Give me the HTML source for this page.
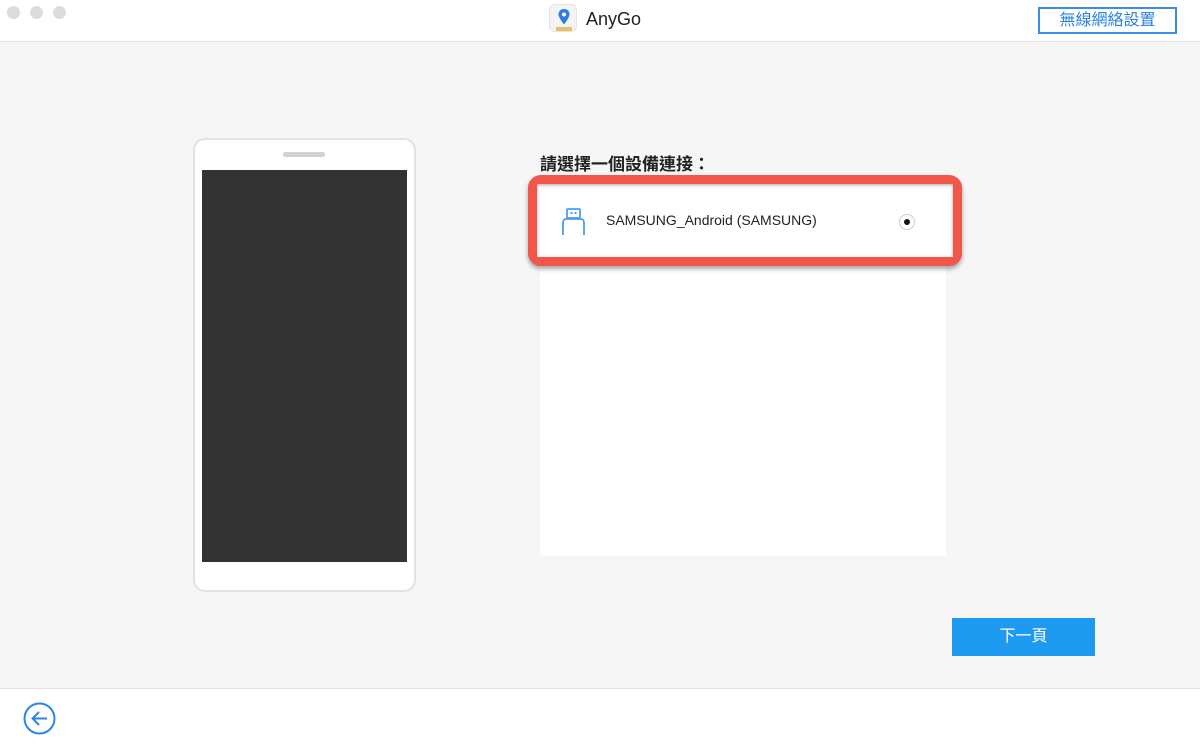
<!DOCTYPE html>
<html><head><meta charset="utf-8"><style>
*{margin:0;padding:0;box-sizing:border-box}
body{width:1200px;height:749px;overflow:hidden;background:#f6f6f6;font-family:"Liberation Sans","Noto Sans CJK TC",sans-serif;position:relative}
.abs{position:absolute}
</style></head><body>
<div class="abs" style="left:0;top:0;width:1200px;height:42px;background:#fff;border-bottom:1px solid #e6e6e6"></div>
<div class="abs" style="left:7px;top:6px;width:13px;height:13px;border-radius:50%;background:#dcdcdc"></div>
<div class="abs" style="left:30px;top:6px;width:13px;height:13px;border-radius:50%;background:#dcdcdc"></div>
<div class="abs" style="left:53px;top:6px;width:13px;height:13px;border-radius:50%;background:#dcdcdc"></div>
<div class="abs" style="left:549px;top:4px;width:28px;height:28px;border-radius:6px;background:#f4f4f4;border:1px solid #e4e4e4;overflow:hidden">
<svg width="28" height="28" viewBox="0 0 28 28"><rect x="6" y="22" width="16" height="6" fill="#e9c06a"/><path d="M14 4c-3.3 0-5.5 2.4-5.5 5.3 0 3.6 5.5 10.2 5.5 10.2s5.5-6.6 5.5-10.2C19.5 6.4 17.3 4 14 4z" fill="#2e7be8"/><circle cx="14" cy="9.5" r="2" fill="#fff"/></svg></div>
<div class="abs" style="left:586px;top:9px;font-size:18px;color:#222">AnyGo</div>
<div class="abs" style="left:1038px;top:7px;width:139px;height:27px;border:2px solid #3a8ee6;color:#2a82e0;font-size:16px;text-align:center;line-height:23px">無線網絡設置</div>

<div class="abs" style="left:193px;top:138px;width:223px;height:454px;background:#fff;border:2px solid #e2e2e2;border-radius:12px"></div>
<div class="abs" style="left:283px;top:152px;width:42px;height:5px;border-radius:3px;background:#d2d2d2"></div>
<div class="abs" style="left:202px;top:170px;width:205px;height:392px;background:#333"></div>

<div class="abs" style="left:540px;top:150px;font-size:17px;font-weight:bold;color:#222">請選擇一個設備連接：</div>
<div class="abs" style="left:540px;top:185px;width:406px;height:371px;background:#fff"></div>
<div class="abs" style="left:528px;top:175px;width:434px;height:91px;border:9px solid #f2564b;border-radius:13px;background:#fff;box-shadow:0 3px 5px rgba(0,0,0,.35)"></div>
<div class="abs" style="left:537px;top:184px;width:416px;height:73px;background:#fff;box-shadow:inset 0 1px 3px rgba(0,0,0,.35)"></div>
<svg class="abs" style="left:559px;top:207px" width="30" height="30" viewBox="0 0 30 30"><rect x="8" y="2" width="13" height="9" rx="1" fill="none" stroke="#4a9cf0" stroke-width="1.8"/><rect x="11.5" y="5" width="2" height="2" fill="#4a9cf0"/><rect x="15.5" y="5" width="2" height="2" fill="#4a9cf0"/><path d="M4 28V16c0-2 1-4 3-4h15c2 0 3 2 3 4v12" fill="none" stroke="#4a9cf0" stroke-width="1.8"/></svg>
<div class="abs" style="left:606px;top:212px;font-size:14px;color:#222">SAMSUNG_Android (SAMSUNG)</div>
<div class="abs" style="left:899px;top:214px;width:16px;height:16px;border-radius:50%;border:1px solid #ccc;background:#fff"></div>
<div class="abs" style="left:904px;top:219px;width:6px;height:6px;border-radius:50%;background:#111"></div>

<div class="abs" style="left:952px;top:618px;width:143px;height:38px;background:#1e9bf0;color:#fff;font-size:16px;text-align:center;line-height:38px">下一頁</div>

<div class="abs" style="left:0;top:688px;width:1200px;height:61px;background:#fff;border-top:1px solid #e2e2e2"></div>
<svg class="abs" style="left:23px;top:702px" width="33" height="33" viewBox="0 0 33 33"><circle cx="16.5" cy="16.5" r="15" fill="none" stroke="#2a86e2" stroke-width="2"/><path d="M24 16.5H10M16 10l-6.5 6.5L16 23" fill="none" stroke="#2a86e2" stroke-width="2"/></svg>
</body></html>
